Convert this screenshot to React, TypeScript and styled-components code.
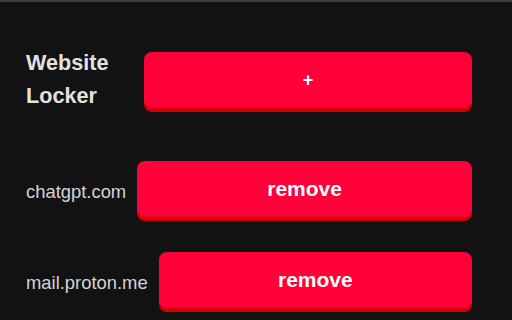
import React from "react";
import styled, { createGlobalStyle } from "styled-components";

const Global = createGlobalStyle`
  html, body { margin: 0; padding: 0; background: #121212; }
  body { font-family: "Liberation Sans", Arial, sans-serif; }
`;

const Page = styled.div`
  box-sizing: border-box;
  width: 512px;
  height: 320px;
  border-top: 2px solid #3b3a42;
  padding: 44px 40px 0 26px;
  display: flex;
  flex-direction: column;
  gap: 31px;
`;

const Row = styled.div<{ $header?: boolean }>`
  display: flex;
  align-items: ${(p) => (p.$header ? "flex-start" : "center")};
  gap: ${(p) => (p.$header ? "36px" : "11px")};
  margin-bottom: ${(p) => (p.$header ? "18px" : "0")};
`;

const Title = styled.h1`
  margin: 0;
  font-size: 21.6px;
  line-height: 33px;
  font-weight: 700;
  color: #e2e2e2;
  width: 82px;
  flex-shrink: 0;
`;

const Site = styled.span`
  font-size: 18.4px;
  line-height: 21px;
  color: #d4d4d4;
  white-space: nowrap;
  flex-shrink: 0;
`;

const RedButton = styled.button<{ $small?: boolean }>`
  flex: 1;
  height: 56px;
  margin-top: ${(p) => (p.$small ? "6px" : "0")};
  margin-bottom: 4px;
  border: none;
  border-radius: 8px;
  background: #ff0038;
  box-shadow: 0 4px 0 #d50006;
  color: #ffffff;
  font-family: "Liberation Sans", Arial, sans-serif;
  font-weight: 700;
  font-size: ${(p) => (p.$small ? "18px" : "21px")};
  cursor: pointer;
  padding: 0;
`;

const sites = ["chatgpt.com", "mail.proton.me"];

export default function App() {
  return (
    <>
      <Global />
      <Page>
        <Row $header>
          <Title>Website Locker</Title>
          <RedButton $small>+</RedButton>
        </Row>
        {sites.map((s) => (
          <Row key={s}>
            <Site>{s}</Site>
            <RedButton>remove</RedButton>
          </Row>
        ))}
      </Page>
    </>
  );
}
